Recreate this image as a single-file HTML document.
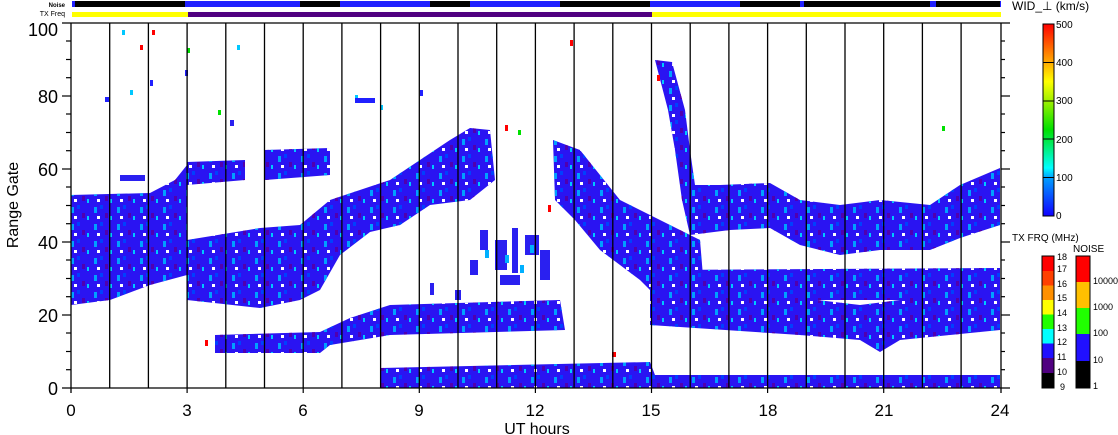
<!DOCTYPE html>
<html><head><meta charset="utf-8"><style>
html,body{margin:0;padding:0;background:#fff;width:1118px;height:435px;overflow:hidden}
svg{display:block}
text{font-family:"Liberation Sans",sans-serif;fill:#000}
</style></head><body>
<svg width="1118" height="435" viewBox="0 0 1118 435" xmlns="http://www.w3.org/2000/svg">
<defs>
<pattern id="sp" width="23" height="17" patternUnits="userSpaceOnUse">
<rect x="2" y="3" width="3" height="6" fill="#00a0ff"/>
<rect x="13" y="9" width="3" height="5" fill="#5000b0"/>
<rect x="8" y="1" width="3" height="4" fill="#0040ff"/>
<rect x="18" y="12" width="2" height="4" fill="#00c8ff"/>
<rect x="5" y="12" width="3" height="3" fill="#ffffff"/>
</pattern>
<clipPath id="blobs">
<path d="M71,195 L150,193 L175,180 L187,165 L187,275 L150,285 L110,300 L71,305 Z"/>
<path d="M187,240 L260,228 L300,225 L330,200 L390,180 L420,160 L450,140 L470,128 L490,130 L495,180 L470,200 L430,205 L400,225 L370,232 L340,255 L320,290 L300,300 L260,308 L187,300 Z"/>
<path d="M187,162 L245,160 L245,180 L187,185 Z"/>
<path d="M265,150 L330,148 L330,175 L265,180 Z"/>
<path d="M215,335 L320,332 L350,318 L390,305 L560,300 L565,330 L390,335 L330,345 L320,353 L215,353 Z"/>
<path d="M553,140 L580,150 L600,175 L620,200 L650,215 L700,240 L705,300 L660,300 L640,280 L600,250 L575,220 L555,200 Z"/>
<path d="M655,60 L672,62 L685,110 L690,150 L695,185 L720,185 L770,183 L800,200 L840,205 L880,200 L930,205 L960,185 L1000,168 L1000,225 L960,238 L930,250 L880,250 L840,255 L800,245 L770,228 L730,230 L690,235 L682,200 L675,150 L668,110 Z"/>
<path d="M650,270 L1000,268 L1000,300 L650,300 Z"/>
<path d="M650,300 L800,298 L860,305 L900,300 L1000,300 L1000,330 L900,340 L880,352 L860,340 L800,335 L650,325 Z"/>
<path d="M380,368 L650,362 L660,388 L380,388 Z"/>
<path d="M650,375 L1000,375 L1000,388 L650,388 Z"/>
</clipPath>
</defs>
<!-- noise and tx freq bars -->
<rect x="72" y="1" width="929" height="6" fill="#2020ff"/>
<rect x="75" y="1" width="110" height="6" fill="#000"/>
<rect x="300" y="1" width="40" height="6" fill="#000"/>
<rect x="430" y="1" width="40" height="6" fill="#000"/>
<rect x="560" y="1" width="90" height="6" fill="#000"/>
<rect x="740" y="1" width="260" height="6" fill="#000"/>
<rect x="800" y="1" width="4" height="6" fill="#2020ff"/>
<rect x="930" y="1" width="6" height="6" fill="#2020ff"/>
<rect x="72" y="12" width="116" height="5" fill="#ffff00"/>
<rect x="188" y="12" width="464" height="5" fill="#500080"/>
<rect x="652" y="12" width="349" height="5" fill="#ffff00"/>
<text x="65" y="7" font-size="6" text-anchor="end" font-weight="bold">Noise</text>
<text x="65" y="16" font-size="7" text-anchor="end">TX Freq</text>

<!-- data -->
<g clip-path="url(#blobs)">
<rect x="60" y="20" width="950" height="370" fill="#2a14f2"/>
<rect x="60" y="20" width="950" height="370" fill="url(#sp)"/>
</g>
<!-- mid sparse region -->
<g fill="#2a20f0">
<rect x="480" y="230" width="8" height="20"/><rect x="495" y="240" width="12" height="30"/><rect x="512" y="228" width="6" height="45"/><rect x="525" y="235" width="14" height="20"/><rect x="540" y="250" width="10" height="30"/><rect x="500" y="275" width="20" height="10"/><rect x="470" y="260" width="8" height="15"/>
<rect x="455" y="290" width="6" height="10"/><rect x="430" y="283" width="4" height="12"/>
<rect x="120" y="175" width="25" height="6"/><rect x="230" y="120" width="4" height="6"/>
</g>
<g fill="#00b0ff"><rect x="485" y="250" width="4" height="8"/><rect x="505" y="255" width="4" height="8"/><rect x="530" y="245" width="4" height="8"/><rect x="520" y="265" width="4" height="8"/></g>
<!-- scattered -->
<g fill="#ff0000"><rect x="152" y="30" width="3" height="5"/><rect x="140" y="45" width="3" height="5"/><rect x="570" y="40" width="3" height="6"/><rect x="505" y="125" width="3" height="6"/><rect x="548" y="205" width="3" height="7"/><rect x="657" y="75" width="3" height="6"/><rect x="205" y="340" width="3" height="6"/><rect x="612" y="352" width="4" height="5"/></g>
<g fill="#00e000"><rect x="187" y="48" width="3" height="5"/><rect x="218" y="110" width="3" height="5"/><rect x="942" y="126" width="3" height="5"/><rect x="518" y="130" width="3" height="5"/></g>
<g fill="#00c8ff"><rect x="122" y="30" width="3" height="5"/><rect x="237" y="45" width="3" height="5"/><rect x="130" y="90" width="3" height="5"/><rect x="355" y="95" width="3" height="5"/><rect x="380" y="105" width="3" height="5"/></g>
<g fill="#2020ff"><rect x="105" y="97" width="4" height="5"/><rect x="355" y="98" width="20" height="5"/><rect x="420" y="90" width="3" height="6"/><rect x="150" y="80" width="3" height="6"/><rect x="185" y="70" width="3" height="6"/></g>

<!-- grid lines -->
<g stroke="#000" stroke-width="1.3">
<line x1="109.7" y1="23" x2="109.7" y2="388"/><line x1="148.4" y1="23" x2="148.4" y2="388"/><line x1="187.1" y1="23" x2="187.1" y2="388"/>
<line x1="225.8" y1="23" x2="225.8" y2="388"/><line x1="264.5" y1="23" x2="264.5" y2="388"/><line x1="303.2" y1="23" x2="303.2" y2="388"/>
<line x1="341.9" y1="23" x2="341.9" y2="388"/><line x1="380.6" y1="23" x2="380.6" y2="388"/><line x1="419.3" y1="23" x2="419.3" y2="388"/>
<line x1="458" y1="23" x2="458" y2="388"/><line x1="496.7" y1="23" x2="496.7" y2="388"/><line x1="535.4" y1="23" x2="535.4" y2="388"/>
<line x1="574.1" y1="23" x2="574.1" y2="388"/><line x1="612.8" y1="23" x2="612.8" y2="388"/><line x1="651.5" y1="23" x2="651.5" y2="388"/>
<line x1="690.2" y1="23" x2="690.2" y2="388"/><line x1="728.9" y1="23" x2="728.9" y2="388"/><line x1="767.6" y1="23" x2="767.6" y2="388"/>
<line x1="806.3" y1="23" x2="806.3" y2="388"/><line x1="845" y1="23" x2="845" y2="388"/><line x1="883.7" y1="23" x2="883.7" y2="388"/>
<line x1="922.4" y1="23" x2="922.4" y2="388"/><line x1="961.1" y1="23" x2="961.1" y2="388"/>
<line x1="71" y1="23" x2="71" y2="393"/><line x1="1001" y1="23" x2="1001" y2="393"/>
<line x1="62" y1="23" x2="1010" y2="23"/><line x1="62" y1="388" x2="1010" y2="388"/>
</g>
<g stroke="#000" stroke-width="1.2">
<line x1="62" y1="96" x2="71" y2="96"/><line x1="62" y1="169" x2="71" y2="169"/><line x1="62" y1="242" x2="71" y2="242"/><line x1="62" y1="315" x2="71" y2="315"/>
<line x1="66" y1="41" x2="71" y2="41"/><line x1="66" y1="59.5" x2="71" y2="59.5"/><line x1="66" y1="77.7" x2="71" y2="77.7"/>
<line x1="66" y1="114" x2="71" y2="114"/><line x1="66" y1="132.5" x2="71" y2="132.5"/><line x1="66" y1="150.7" x2="71" y2="150.7"/>
<line x1="66" y1="187" x2="71" y2="187"/><line x1="66" y1="205.5" x2="71" y2="205.5"/><line x1="66" y1="223.7" x2="71" y2="223.7"/>
<line x1="66" y1="260" x2="71" y2="260"/><line x1="66" y1="278.5" x2="71" y2="278.5"/><line x1="66" y1="296.7" x2="71" y2="296.7"/>
<line x1="66" y1="333" x2="71" y2="333"/><line x1="66" y1="351.5" x2="71" y2="351.5"/><line x1="66" y1="369.7" x2="71" y2="369.7"/>
<line x1="1001" y1="96" x2="1010" y2="96"/><line x1="1001" y1="169" x2="1010" y2="169"/><line x1="1001" y1="242" x2="1010" y2="242"/><line x1="1001" y1="315" x2="1010" y2="315"/>
<line x1="1001" y1="41" x2="1005" y2="41"/><line x1="1001" y1="59.5" x2="1005" y2="59.5"/><line x1="1001" y1="77.7" x2="1005" y2="77.7"/>
<line x1="1001" y1="114" x2="1005" y2="114"/><line x1="1001" y1="132.5" x2="1005" y2="132.5"/><line x1="1001" y1="150.7" x2="1005" y2="150.7"/>
<line x1="1001" y1="187" x2="1005" y2="187"/><line x1="1001" y1="205.5" x2="1005" y2="205.5"/><line x1="1001" y1="223.7" x2="1005" y2="223.7"/>
<line x1="1001" y1="260" x2="1005" y2="260"/><line x1="1001" y1="278.5" x2="1005" y2="278.5"/><line x1="1001" y1="296.7" x2="1005" y2="296.7"/>
<line x1="1001" y1="333" x2="1005" y2="333"/><line x1="1001" y1="351.5" x2="1005" y2="351.5"/><line x1="1001" y1="369.7" x2="1005" y2="369.7"/>
<line x1="187.1" y1="388" x2="187.1" y2="393"/><line x1="303.2" y1="388" x2="303.2" y2="393"/><line x1="419.3" y1="388" x2="419.3" y2="393"/><line x1="535.4" y1="388" x2="535.4" y2="393"/><line x1="651.5" y1="388" x2="651.5" y2="393"/><line x1="767.6" y1="388" x2="767.6" y2="393"/><line x1="883.7" y1="388" x2="883.7" y2="393"/>
</g>
<g font-size="18" fill="#222">
<text x="58" y="36" text-anchor="end">100</text>
<text x="58" y="103" text-anchor="end">80</text>
<text x="58" y="176" text-anchor="end">60</text>
<text x="58" y="249" text-anchor="end">40</text>
<text x="58" y="322" text-anchor="end">20</text>
<text x="58" y="395" text-anchor="end">0</text>
</g>
<g font-size="17" text-anchor="middle">
<text x="71" y="416">0</text><text x="187" y="416">3</text><text x="303" y="416">6</text><text x="419" y="416">9</text><text x="535" y="416">12</text><text x="651" y="416">15</text><text x="768" y="416">18</text><text x="884" y="416">21</text><text x="1000" y="416">24</text>
<text x="537" y="434" font-size="16">UT hours</text>
</g>
<text x="18" y="205" font-size="16" text-anchor="middle" transform="rotate(-90 18 205)">Range Gate</text>

<defs><linearGradient id="wg" x1="0" y1="1" x2="0" y2="0">
<stop offset="0" stop-color="#1000ff"/><stop offset="0.2" stop-color="#00a0ff"/><stop offset="0.25" stop-color="#00ffff"/><stop offset="0.45" stop-color="#00e000"/><stop offset="0.6" stop-color="#a0f000"/><stop offset="0.7" stop-color="#ffff00"/><stop offset="0.85" stop-color="#ff8000"/><stop offset="1" stop-color="#ff0000"/></linearGradient></defs>
<text x="1012" y="10" font-size="12">WID_⊥ (km/s)</text>
<rect x="1043" y="24" width="11" height="192" fill="url(#wg)" stroke="#000" stroke-width="1"/>
<g stroke="#000"><line x1="1043" y1="62.5" x2="1054" y2="62.5"/><line x1="1043" y1="101" x2="1054" y2="101"/><line x1="1043" y1="139" x2="1054" y2="139"/><line x1="1043" y1="177.5" x2="1054" y2="177.5"/></g>
<g font-size="10"><text x="1056" y="28">500</text><text x="1056" y="66">400</text><text x="1056" y="104">300</text><text x="1056" y="143">200</text><text x="1056" y="181">100</text><text x="1056" y="219">0</text></g>

<text x="1012" y="241" font-size="10">TX FRQ (MHz)</text>
<text x="1073" y="252" font-size="10">NOISE</text>
<g>
<rect x="1042" y="256" width="12" height="15" fill="#ff0000"/>
<rect x="1042" y="271" width="12" height="14.5" fill="#ff4000"/>
<rect x="1042" y="285.5" width="12" height="14.5" fill="#ff9000"/>
<rect x="1042" y="300" width="12" height="14.5" fill="#ffff00"/>
<rect x="1042" y="314.5" width="12" height="14.5" fill="#20ff00"/>
<rect x="1042" y="329" width="12" height="14.5" fill="#00ffff"/>
<rect x="1042" y="343.5" width="12" height="14.5" fill="#2010ff"/>
<rect x="1042" y="358" width="12" height="15" fill="#500080"/>
<rect x="1042" y="373" width="12" height="15" fill="#000"/>
<rect x="1042" y="256" width="12" height="132" fill="none" stroke="#000"/>
<rect x="1076" y="256" width="14" height="26" fill="#ff0000"/>
<rect x="1076" y="282" width="14" height="26" fill="#ffc000"/>
<rect x="1076" y="308" width="14" height="26" fill="#20ff00"/>
<rect x="1076" y="334" width="14" height="27" fill="#2010ff"/>
<rect x="1076" y="361" width="14" height="27" fill="#000"/>
<rect x="1076" y="256" width="14" height="132" fill="none" stroke="#000"/>
</g>
<g font-size="9">
<text x="1057" y="260">18</text><text x="1057" y="272">17</text><text x="1057" y="287">16</text><text x="1057" y="301">15</text><text x="1057" y="316">14</text><text x="1057" y="331">13</text><text x="1057" y="345">12</text><text x="1057" y="360">11</text><text x="1057" y="375">10</text><text x="1060" y="390">9</text>
<text x="1093" y="284">10000</text><text x="1093" y="310">1000</text><text x="1093" y="336">100</text><text x="1093" y="363">10</text><text x="1093" y="389">1</text>
</g>
</svg>
</body></html>
